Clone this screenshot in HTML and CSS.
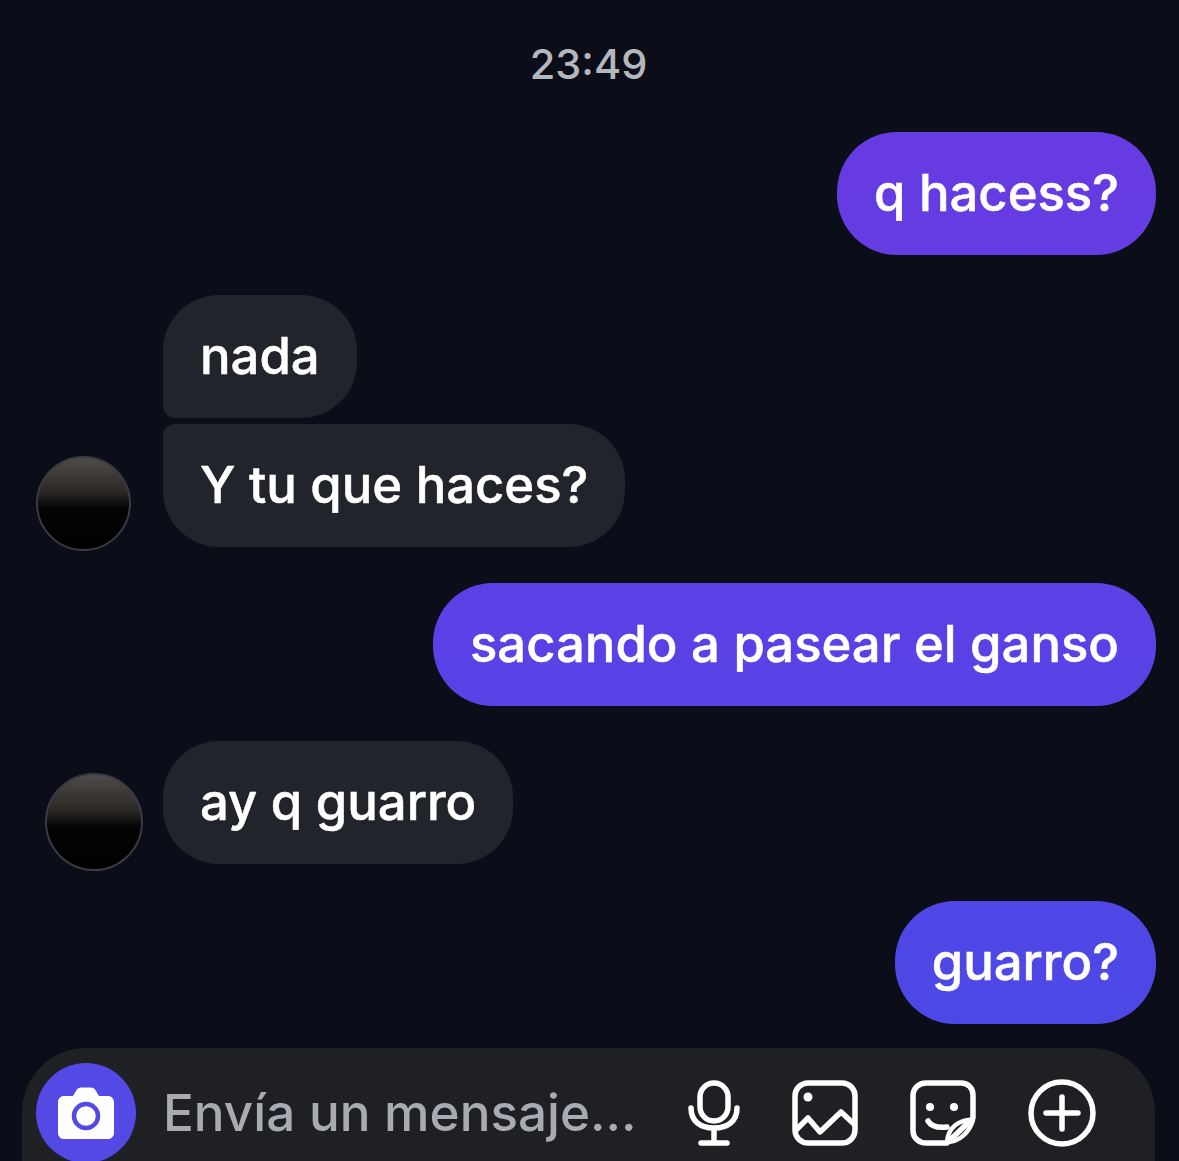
FILE: index.html
```html
<!DOCTYPE html>
<html lang="es">
<head>
<meta charset="utf-8">
<title>Chat</title>
<link rel="stylesheet" href="styles.css">
</head>
<body>
<main class="chat">
  <div class="time">23:49</div>
  <div class="row out first-out"><div class="bubble sent">q hacess?</div></div>
  <div class="row in group-in">
    <div class="avatar-slot"><div class="avatar avatar-a"></div></div>
    <div class="stack">
      <div class="bubble recv top">nada</div>
      <div class="bubble recv bottom">Y tu que haces?</div>
    </div>
  </div>
  <div class="row out gap36"><div class="bubble sent">sacando a pasear el ganso</div></div>
  <div class="row in gap35">
    <div class="avatar-slot"><div class="avatar avatar-b"></div></div>
    <div class="bubble recv">ay q guarro</div>
  </div>
  <div class="row out gap37"><div class="bubble sent">guarro?</div></div>
</main>
<footer class="composer">
  <div class="camera">
    <svg viewBox="0 0 56 52" width="56" height="52" aria-hidden="true">
      <path fill="#fff" d="M6 9h9l3-5C19.500 1.300 21 .5 23.500 .5h9c2.500 0 4 .8 5.500 3.500l3 5h9c3.300 0 6 2.700 6 6v31c0 3.300-2.700 6-6 6H6c-3.300 0-6-2.700-6-6V15c0-3.300 2.700-6 6-6z"/>
      <circle cx="28" cy="29" r="12" fill="none" stroke="#5449e4" stroke-width="4.500"/>
    </svg>
  </div>
  <div class="placeholder">Envía un mensaje...</div>
  <div class="tools">
    <svg class="tool mic" viewBox="0 0 52 66" aria-hidden="true">
      <rect x="12" y="3" width="28" height="38" rx="14"/>
      <path d="M3 28c0 13 9 20 23 20s23-7 23-20M26 48v14M13 63h26"/>
    </svg>
    <svg class="tool pic" viewBox="0 0 66 66" aria-hidden="true">
      <rect x="3" y="3" width="60" height="60" rx="13"/>
      <circle class="dot" cx="16" cy="17" r="4.500"/>
      <path d="M4 50l12-12 12 14 21-20 13 12"/>
    </svg>
    <svg class="tool sticker" viewBox="0 0 66 66" aria-hidden="true">
      <path d="M16 3h35c7 0 12 5 12 12v23L37 63H16C9 63 3 58 3 51V16C3 8 9 3 16 3z"/>
      <path class="leaf" d="M63 40c-13-1-25 7-26 22 12 0 22-9 26-22z"/>
      <path d="M18 41c3 5 10 7 19 6"/>
      <circle class="dot" cx="20" cy="27" r="4"/>
      <circle class="dot" cx="44" cy="27" r="4"/>
    </svg>
    <svg class="tool plus" viewBox="0 0 68 68" aria-hidden="true">
      <circle cx="34" cy="34" r="31"/>
      <path d="M34 18v32M18 34h32"/>
    </svg>
  </div>
</footer>
</body>
</html>
```
FILE: styles.css
```css
* { box-sizing: border-box; }
html, body { margin: 0; height: 100%; }
body {
  width: 1179px;
  height: 1161px;
  overflow: hidden;
  background: #0b0e18;
  color: #fff;
  font-family: Inter, "Liberation Sans", sans-serif;
  display: flex;
  flex-direction: column;
}
.chat { flex: 1; display: flex; flex-direction: column; padding: 0 23px 0 36px; }
.time {
  height: 132px;
  padding-top: 41px;
  text-align: center;
  font-size: 41.500px;
  line-height: 46px;
  color: #b4b7bd;
  font-weight: 500;
  margin-left: -15px;
}
.row { display: flex; }
.out { justify-content: flex-end; }
.in { align-items: flex-end; }
.group-in { margin-top: 40px; }
.gap36 { margin-top: 36px; }
.gap35 { margin-top: 35px; }
.gap37 { margin-top: 37px; }
.stack { display: flex; flex-direction: column; align-items: flex-start; gap: 6px; }
.bubble {
  height: 123px;
  padding: 0 37px;
  font-size: 50.800px;
  font-weight: 500;
  line-height: 121px;
  white-space: nowrap;
  -webkit-text-stroke: 0.5px #fff;
}
.sent {
  background: linear-gradient(180deg, #6a3ae0 0%, #5c40e6 50%, #4a49e6 90%) fixed;
  border-radius: 60px;
}
.recv { background: #22242b; border-radius: 56px; }
.recv.top { border-bottom-left-radius: 12px; }
.recv.bottom { border-top-left-radius: 12px; }
.avatar-slot { width: 127px; flex: none; }
.avatar {
  border-radius: 50%;
  border: 2px solid #3a3b40;
  background: linear-gradient(180deg, #4f4b48 0%, #2a2725 38%, #050404 55%, #000 100%);
}
.avatar-a { width: 95px; height: 95px; margin-bottom: -4px; }
.avatar-b { width: 98px; height: 98px; margin-left: 9px; margin-bottom: -7px; }
.composer {
  height: 113px;
  margin: 0 24px 0 22px;
  background: #1f2024;
  border-radius: 64px 64px 0 0;
  display: flex;
  align-items: flex-start;
  padding: 15px 59px 0 14px;
  flex: none;
}
.camera {
  width: 100px;
  height: 100px;
  border-radius: 50%;
  background: #5449e4;
  flex: none;
  display: flex;
  align-items: center;
  justify-content: center;
}
.placeholder {
  margin-left: 27px;
  font-size: 51.200px;
  line-height: 98px;
  font-weight: 500;
  color: #a9abb2;
  white-space: nowrap;
}
.tools { margin-left: auto; display: flex; align-items: center; height: 100px; gap: 52px; }
.tool { fill: none; stroke: #fff; stroke-width: 5.500; stroke-linecap: round; stroke-linejoin: round; flex: none; }
.tool .dot { fill: #fff; stroke: none; }
.tool .leaf { stroke-width: 4.500; }
.mic { width: 52px; height: 66px; }
.pic, .sticker { width: 66px; height: 66px; }
.plus { width: 68px; height: 68px; }
```
